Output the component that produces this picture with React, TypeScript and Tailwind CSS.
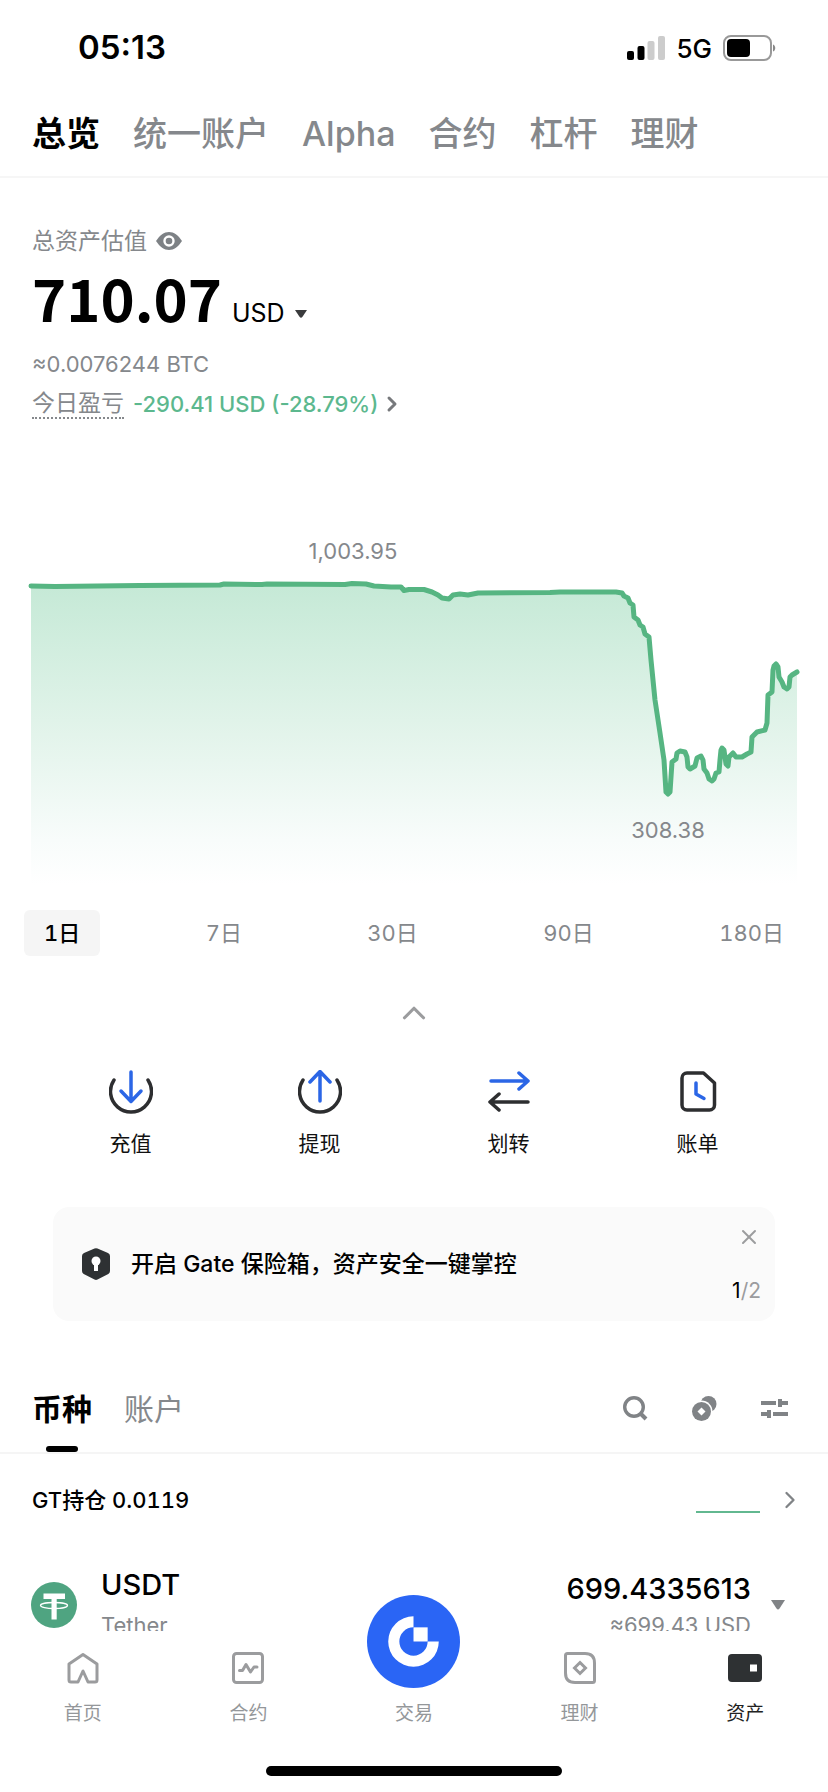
import { useState } from "react";
import type { ReactNode } from "react";
import { ChevronRight, ChevronUp, X } from "lucide-react";

const topTabs = ["总览", "统一账户", "Alpha", "合约", "杠杆", "理财"];
const ranges = ["1日", "7日", "30日", "90日", "180日"];

// account value over the day, in chart units
const points =
  "31,56 55,56.5 140,55.5 220,55 224,54 262,54.5 267,54 345,54.5 352,53.5 366,54 374,56 391,57 401,57 404,60.5 409,59.5 424,59.5 432,62 438,65 442,68 449,69 453,65 460,64 468,65 478,63 550,62.5 560,62 605,62 616,62 622,63 624,66 628,68 630,73 633,75 634,87 638,90 640,95 643,97 645,104 649,107 651,130 655,170 660,203 664,230 666,262 668,264 670,262 672,232 676,229 677,223 680,221 685,222 687,227 688,237 690,239 695,236 697,228 701,226 703,230 704,239 707,243 709,249 712,251 714,249 716,243 719,242 720,230 721,220 722,218 724,220 726,234 728,236 729,227 733,223 736,227 742,227 747,224 751,222 752,207 757,202 765,200 767,193 768,165 772,162 773,140 774,136 776,134 778,137 779,147 782,152 784,157 787,159 789,157 790,147 792,145 797,142";

function StatusBar() {
  return (
    <div className="flex h-[94px] shrink-0 items-center justify-between pl-[78px] pr-[52px] pt-[2px]">
      <span className="text-[33px] font-semibold text-black">05:13</span>
      <div className="flex items-center gap-[11px]">
        <svg width="38" height="24" viewBox="0 0 38 24">
          <rect x="0" y="15" width="7" height="9" rx="2" fill="#000" />
          <rect x="10.5" y="10" width="7" height="14" rx="2" fill="#000" />
          <rect x="20.5" y="5" width="7" height="19" rx="2" fill="#ccc" />
          <rect x="31" y="0" width="7" height="24" rx="2" fill="#ccc" />
        </svg>
        <span className="text-[26px] font-medium text-black">5G</span>
        <svg width="53" height="26" viewBox="0 0 53 26">
          <rect x="1" y="1" width="47" height="24" rx="7" fill="none" stroke="#999" strokeWidth="2" />
          <rect x="4" y="4" width="23" height="18" rx="4" fill="#000" />
          <path d="M50 9.5c3 1 3 6 0 7z" fill="#888" />
        </svg>
      </div>
    </div>
  );
}

function Chart() {
  return (
    <svg viewBox="0 0 828 360" className="mt-[108px] block w-full">
      <defs>
        <linearGradient id="area" x1="0" y1="54" x2="0" y2="355" gradientUnits="userSpaceOnUse">
          <stop offset="0" stopColor="#c5e9d6" />
          <stop offset="0.5" stopColor="#e3f4eb" />
          <stop offset="0.85" stopColor="#f8fcfb" />
          <stop offset="1" stopColor="#fff" />
        </linearGradient>
      </defs>
      <polygon points={`${points} 797,355 31,355`} fill="url(#area)" />
      <polyline
        points={points}
        fill="none"
        stroke="#56b582"
        strokeWidth="5"
        strokeLinecap="round"
        strokeLinejoin="round"
      />
      <text x="353" y="29" textAnchor="middle" fontSize="22" fill="#85888c">
        1,003.95
      </text>
      <text x="668" y="308" textAnchor="middle" fontSize="22" fill="#85888c">
        308.38
      </text>
    </svg>
  );
}

function Action({ label, children }: { label: string; children: ReactNode }) {
  return (
    <button className="flex flex-col items-center gap-[17px]">
      <svg
        width="44"
        height="44"
        viewBox="0 0 44 44"
        fill="none"
        stroke="#2d2e30"
        strokeWidth="3.5"
        strokeLinecap="round"
        strokeLinejoin="round"
      >
        {children}
      </svg>
      <span className="text-[21px] leading-[26px] text-[#111]">{label}</span>
    </button>
  );
}

function NavItem({ label, active, children }: { label: string; active?: boolean; children: ReactNode }) {
  return (
    <a href="#" className="flex flex-col items-center gap-[15px]">
      <svg
        width="34"
        height="34"
        viewBox="0 0 34 34"
        fill="none"
        stroke="#9b9c9e"
        strokeWidth="3"
        strokeLinejoin="round"
        strokeLinecap="round"
      >
        {children}
      </svg>
      <span className={`text-[19px] leading-[28px] ${active ? "text-[#222]" : "text-[#94979a]"}`}>
        {label}
      </span>
    </a>
  );
}

export default function App() {
  const [range, setRange] = useState("1日");

  return (
    <div className="flex h-screen flex-col bg-white font-['Inter','Noto_Sans_CJK_SC',sans-serif] text-black">
      <StatusBar />
      <nav className="flex h-[84px] shrink-0 items-center gap-[33px] border-b-2 border-[#f6f6f6] px-8 pb-[2px]">
        {topTabs.map((tab, i) => (
          <a
            key={tab}
            href="#"
            className={`text-[34px] leading-[48px] ${i === 0 ? "font-semibold text-black" : "font-medium text-[#85888c]"}`}
          >
            {tab}
          </a>
        ))}
      </nav>

      <main className="min-h-0 flex-1 overflow-y-auto [scrollbar-width:none]">
        <section className="px-8 pt-[46px]">
          <div className="flex h-[34px] items-center gap-[9px] text-[23px] text-[#85888c]">
            总资产估值
            <button aria-label="隐藏资产">
              <svg width="26" height="18" viewBox="0 0 26 18" className="block">
                <path d="M0 9C4 3 8 0 13 0s9 3 13 9c-4 6-8 9-13 9S4 15 0 9z" fill="#7d8185" />
                <circle cx="13" cy="9" r="4.5" fill="none" stroke="#fff" strokeWidth="2.4" />
              </svg>
            </button>
          </div>
          <div className="flex h-[84px] items-baseline gap-[10px]">
            <span className="font-['Noto_Sans_CJK_SC'] text-[58px] font-bold leading-[78px]">710.07</span>
            <button className="flex items-center gap-[10px] text-[25px]">
              USD
              <svg width="12" height="8" viewBox="0 0 12 8">
                <path d="M0 0h12L7.500 6.800Q6 8.500 4.500 6.800z" fill="#3a3b3d" />
              </svg>
            </button>
          </div>
          <p className="text-[22px] leading-[44px] text-[#85888c]">≈0.0076244 BTC</p>
          <div className="flex h-9 items-center gap-[9px]">
            <span className="border-b-2 border-dotted border-[#85888c] text-[23px] leading-[28px] text-[#85888c]">
              今日盈亏
            </span>
            <a href="#" className="flex items-center gap-[2px] text-[22px] font-medium text-[#5cb88e]">
              -290.41 USD (-28.79%)
              <ChevronRight size={24} strokeWidth={3} className="text-[#77797c]" />
            </a>
          </div>
        </section>

        <Chart />

        <div className="mt-5 flex justify-between px-6">
          {ranges.map((r) => (
            <button
              key={r}
              onClick={() => setRange(r)}
              className={`h-[46px] rounded-md px-5 text-[22px] tabular-nums ${r === range ? "bg-[#f5f5f5] font-medium text-black" : "text-[#85888c]"}`}
            >
              {r}
            </button>
          ))}
        </div>

        <button aria-label="收起" className="mx-auto mt-10 flex h-[34px] items-center text-[#9b9c9e]">
          <ChevronUp size={38} strokeWidth={2} />
        </button>

        <div className="mt-10 grid grid-cols-4 px-9">
          <Action label="充值">
            <path d="M5 10A20.500 20.500 0 1 0 39 10" />
            <path d="M22 2V31M12 21l10 10.500L32 21" stroke="#2b66e6" />
          </Action>
          <Action label="提现">
            <path d="M5 10A20.500 20.500 0 1 0 39 10" />
            <path d="M22 31V2M12 12L22 1.500 32 12" stroke="#2b66e6" />
          </Action>
          <Action label="划转">
            <path d="M4 11H41M32 3l9 8-9 8" stroke="#2b66e6" />
            <path d="M41 32H3M12 24l-9 8 9 8" />
          </Action>
          <Action label="账单">
            <path d="M11 3H27.500L38.500 13V35a5 5 0 0 1-5 5H11a5 5 0 0 1-5-5V8a5 5 0 0 1 5-5z" />
            <path d="M20 13V24l8 4.500" stroke="#2b66e6" />
          </Action>
        </div>

        <section className="mx-[53px] mt-[50px] flex h-[114px] items-center rounded-2xl bg-[#fafafa] pl-[29px] pr-[14px]">
          <svg width="28" height="32" viewBox="0 0 28 32">
            <path
              d="M12.500.6q1.500-.8 3 0L26 5q2 1 2 3v15q0 2-1.700 3L15.500 31.500q-1.500.8-3 0L1.700 26Q0 25 0 23V8Q0 6 2 5z"
              fill="#2e3133"
            />
            <circle cx="14" cy="13" r="4.500" fill="#fff" />
            <path d="M12 14h4v9h-4z" fill="#fff" />
          </svg>
          <p className="ml-[21px] flex-1 text-[23px] font-medium">开启 Gate 保险箱，资产安全一键掌控</p>
          <div className="flex h-full flex-col items-end justify-between pb-[17px] pt-[18px]">
            <button aria-label="关闭" className="text-[#9b9c9e]">
              <X size={24} strokeWidth={2} />
            </button>
            <span className="text-[21px] leading-[26px] text-[#9b9c9e]">
              <span className="text-black">1</span>/2
            </span>
          </div>
        </section>

        <div className="mt-[43px] flex h-[90px] items-stretch border-b-2 border-[#f5f5f5] pl-8 pr-10">
          <div className="flex flex-1 gap-8 text-[30px]">
            <a href="#" className="flex flex-col items-center justify-between font-semibold">
              <span className="h-[82px] leading-[90px]">币种</span>
              <span className="h-[6px] w-8 rounded-sm bg-black" />
            </a>
            <a href="#" className="leading-[90px] text-[#85888c]">
              账户
            </a>
          </div>
          <div className="flex items-center gap-11">
            <button aria-label="搜索">
              <svg width="25" height="25" viewBox="0 0 25 25" fill="none" stroke="#808386">
                <circle cx="11" cy="11" r="9.300" strokeWidth="3.400" />
                <path d="M17.500 17.500L23 23" strokeWidth="4" />
              </svg>
            </button>
            <button aria-label="零钱兑换">
              <svg width="25" height="25" viewBox="0 0 25 25">
                <circle cx="16.500" cy="8" r="8" fill="#808386" />
                <circle cx="9.500" cy="15.500" r="11" fill="#fff" />
                <circle cx="9.500" cy="15.500" r="9.500" fill="#808386" />
                <path d="M9.500 11.500l4 4-4 4-4-4z" fill="#fff" />
              </svg>
            </button>
            <button aria-label="筛选">
              <svg width="27" height="20" viewBox="0 0 27 20" fill="#808386">
                <path d="M0 3h15v4H0zM17 1h4v8h-4zM21 3h6v4h-6zM12 14h15v4H12zM6 12h4v8H6zM0 14h6v4H0z" />
              </svg>
            </button>
          </div>
        </div>

        <a href="#" className="flex h-[92px] items-center pl-8 pr-6">
          <span className="flex-1 text-[22px] font-medium tabular-nums">GT持仓 0.0119</span>
          <span className="mt-6 h-[2px] w-16 bg-[#62b890]" />
          <ChevronRight size={28} strokeWidth={2} className="ml-4 text-[#808386]" />
        </a>

        <div className="flex h-[118px] items-center pl-[31px] pr-[43px]">
          <svg width="46" height="46" viewBox="0 0 46 46">
            <circle cx="23" cy="23" r="23" fill="#4fa481" />
            <path d="M12.500 11.500h21.500v5.500h-8.300v20.500h-5.200v-20.500h-8z" fill="#fff" />
            <ellipse cx="23" cy="23.500" rx="13.500" ry="3" fill="none" stroke="#fff" strokeWidth="1.300" />
          </svg>
          <div className="ml-6 flex-1">
            <p className="text-[29px] font-medium leading-[40px]">USDT</p>
            <p className="text-[22px] leading-[40px] text-[#85888c]">Tether</p>
          </div>
          <div className="pt-1 text-right">
            <p className="text-[29px] font-medium leading-[36px]">699.4335613</p>
            <p className="text-[22px] leading-[36px] text-[#85888c]">≈699.43 USD</p>
          </div>
          <svg width="14" height="10" viewBox="0 0 14 10" className="ml-5">
            <path d="M0 0h14L8.500 8.500Q7 10.500 5.500 8.500z" fill="#808386" />
          </svg>
        </div>
      </main>

      <footer className="relative z-10 shrink-0 bg-white pb-4">
        <nav className="grid grid-cols-5 pt-5">
          <NavItem label="首页">
            <path d="M17 3.500L31 13V29Q31 31 29 31H22L17 20 12 31H5Q3 31 3 29V13z" />
          </NavItem>
          <NavItem label="合约">
            <rect x="2.500" y="2.500" width="29" height="29" rx="3" />
            <path d="M8.500 19.500h3l3.500-6 4.500 7.500 3.500-5h3" />
          </NavItem>
          <a href="#" className="-mt-14 flex flex-col items-center gap-3">
            <svg width="93" height="93" viewBox="0 0 92 92">
              <circle cx="46" cy="46" r="46" fill="#2a65f5" />
              <path d="M46 21A25 25 0 1 0 71 46H60A14 14 0 1 1 46 32z" fill="#fff" />
              <path d="M46 32h14v14H46z" fill="#fff" />
            </svg>
            <span className="text-[19px] leading-[28px] text-[#94979a]">交易</span>
          </a>
          <NavItem label="理财">
            <path d="M4.500 2.500H22Q31.500 2.500 31.500 12V29.500Q31.500 31.500 29.500 31.500H12Q2.500 31.500 2.500 22V4.500Q2.500 2.500 4.500 2.500z" />
            <path d="M17 11.500l5.500 5.500-5.500 5.500-5.500-5.500z" strokeLinejoin="miter" />
          </NavItem>
          <NavItem label="资产" active>
            <rect x="0" y="3" width="34" height="28" rx="4" fill="#2e3133" stroke="none" />
            <path d="M22 13.500h7v7h-7z" fill="#fff" stroke="none" />
          </NavItem>
        </nav>
        <div className="mx-auto mt-[38px] h-[10px] w-[296px] rounded-full bg-black" />
      </footer>
    </div>
  );
}
